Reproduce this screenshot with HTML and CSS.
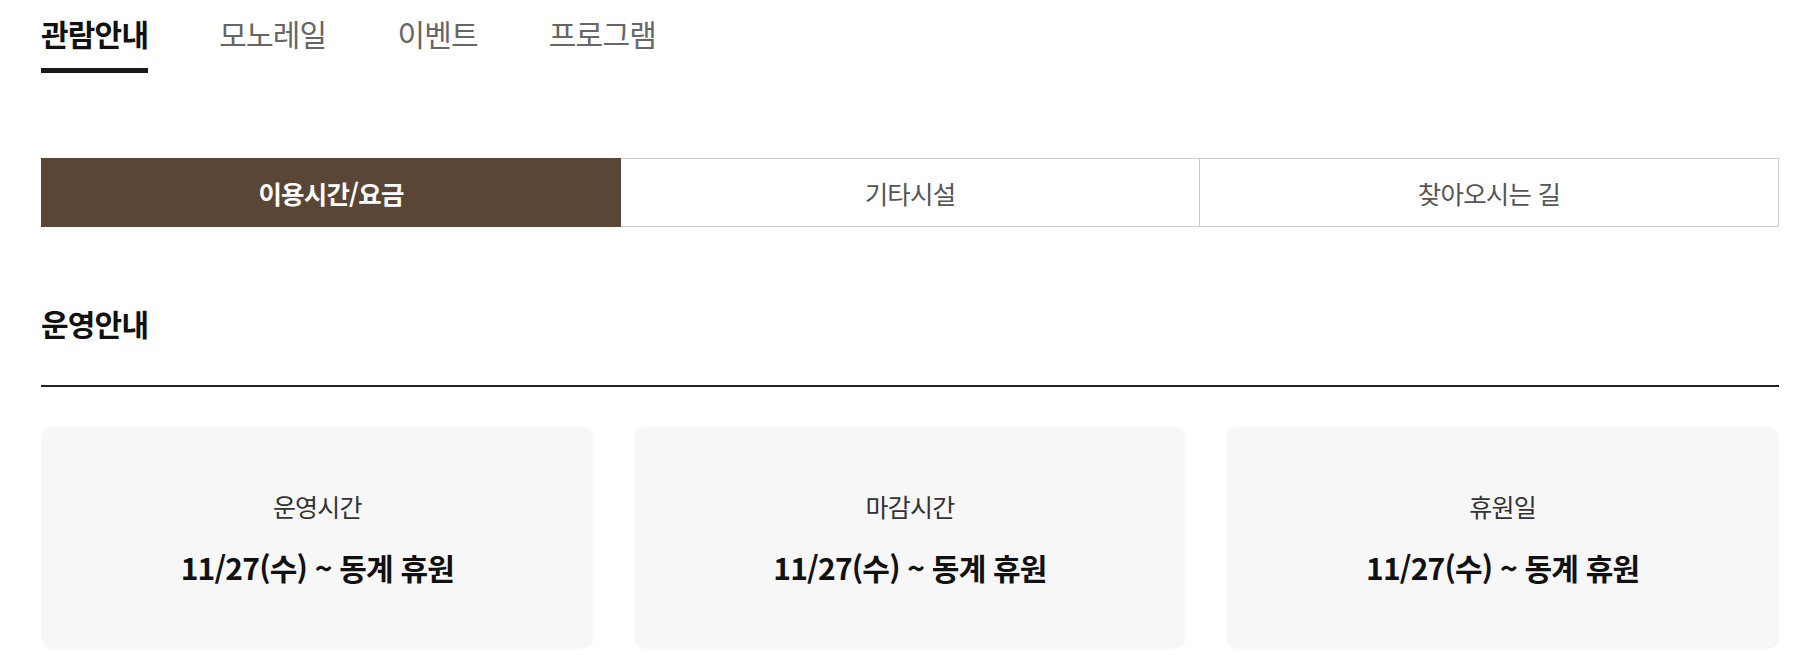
FILE: index.html
```html
<!DOCTYPE html>
<html lang="ko">
<head>
    <meta charset="UTF-8">
    <meta name="viewport" content="width=device-width, initial-scale=1.0">
    <title>관람안내</title>
    <link rel="stylesheet" href="styles.css">
</head>
<body>
    <div class="wrap">
        <ul class="gnb">
            <li class="gnb-item active">관람안내</li>
            <li class="gnb-item">모노레일</li>
            <li class="gnb-item">이벤트</li>
            <li class="gnb-item">프로그램</li>
        </ul>

        <ul class="sub-tabs">
            <li class="sub-tab active">이용시간/요금</li>
            <li class="sub-tab">기타시설</li>
            <li class="sub-tab">찾아오시는 길</li>
        </ul>

        <h2 class="section-title">운영안내</h2>

        <div class="info-cards">
            <div class="info-card">
                <p class="info-label">운영시간</p>
                <p class="info-value">11/27(수) ~ 동계 휴원</p>
            </div>
            <div class="info-card">
                <p class="info-label">마감시간</p>
                <p class="info-value">11/27(수) ~ 동계 휴원</p>
            </div>
            <div class="info-card">
                <p class="info-label">휴원일</p>
                <p class="info-value">11/27(수) ~ 동계 휴원</p>
            </div>
        </div>
    </div>
</body>
</html>
```

FILE: styles.css
```css
body {
    margin: 0;
    padding: 0;
    background-color: #fff;
    font-family: "Noto Sans CJK KR", "Noto Sans", sans-serif;
    color: #111;
    letter-spacing: -0.05em;
}
ul {
    margin: 0;
    padding: 0;
    list-style: none;
}
.wrap {
    padding: 0 25px 0 41px;
}
.gnb {
    display: flex;
    gap: 71px;
    padding-top: 12px;
}
.gnb-item {
    font-size: 30px;
    line-height: 42px;
    padding-bottom: 14px;
    border-bottom: 5px solid transparent;
    color: #666;
}
.gnb-item.active {
    color: #111;
    font-weight: 700;
    border-bottom-color: #1a1a1a;
}
.sub-tabs {
    display: flex;
    margin-top: 85px;
}
.sub-tab {
    flex: 1;
    height: 69px;
    box-sizing: border-box;
    display: flex;
    align-items: center;
    justify-content: center;
    font-size: 25.5px;
    color: #555;
    border: 1px solid #ccc;
    border-left: none;
}
.sub-tab:first-child {
    border-left: 1px solid #ccc;
}
.sub-tab.active {
    background-color: #5a4637;
    border-color: #5a4637;
    color: #fff;
    font-weight: 700;
}
.section-title {
    margin: 75px 0 0;
    font-size: 30px;
    line-height: 42px;
    font-weight: 700;
    padding-bottom: 41px;
    border-bottom: 2px solid #222;
}
.info-cards {
    display: grid;
    grid-template-columns: repeat(3, 1fr);
    gap: 40px;
    margin-top: 40px;
}
.info-card {
    height: 222px;
    box-sizing: border-box;
    padding-top: 62px;
    background-color: #f7f7f7;
    border-radius: 12px;
    text-align: center;
}
.info-label {
    margin: 0;
    font-size: 25px;
    line-height: 34px;
    color: #333;
}
.info-value {
    margin: 24px 0 0;
    font-size: 30px;
    line-height: 40px;
    font-weight: 700;
    color: #111;
}
```
